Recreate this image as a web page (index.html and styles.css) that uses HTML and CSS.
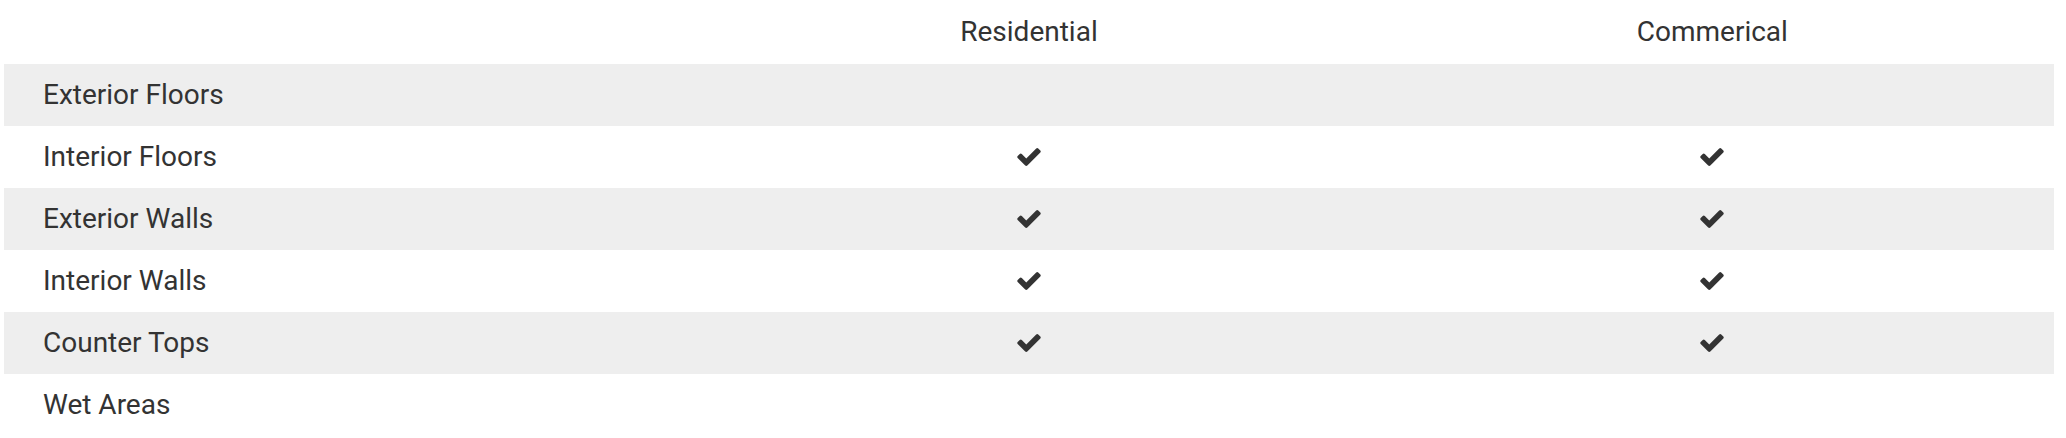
FILE: index.html
```html
<!DOCTYPE html>
<html lang="en">
<head>
<meta charset="utf-8">
<title>Surfaces</title>
<link rel="stylesheet" href="styles.css">
</head>
<body>
<table class="usage">
  <thead>
    <tr><th></th><th>Residential</th><th>Commerical</th></tr>
  </thead>
  <tbody>
    <tr><td>Exterior Floors</td><td></td><td></td></tr>
    <tr><td>Interior Floors</td><td><svg class="check" viewBox="121 334 1550 1188"><path d="M1671 566q0 40-28 68l-724 724-136 136q-28 28-68 28t-68-28l-136-136-362-362q-28-28-28-68t28-68l136-136q28-28 68-28t68 28l294 295 656-657q28-28 68-28t68 28l136 136q28 28 28 68z"/></svg></td><td><svg class="check" viewBox="121 334 1550 1188"><path d="M1671 566q0 40-28 68l-724 724-136 136q-28 28-68 28t-68-28l-136-136-362-362q-28-28-28-68t28-68l136-136q28-28 68-28t68 28l294 295 656-657q28-28 68-28t68 28l136 136q28 28 28 68z"/></svg></td></tr>
    <tr><td>Exterior Walls</td><td><svg class="check" viewBox="121 334 1550 1188"><path d="M1671 566q0 40-28 68l-724 724-136 136q-28 28-68 28t-68-28l-136-136-362-362q-28-28-28-68t28-68l136-136q28-28 68-28t68 28l294 295 656-657q28-28 68-28t68 28l136 136q28 28 28 68z"/></svg></td><td><svg class="check" viewBox="121 334 1550 1188"><path d="M1671 566q0 40-28 68l-724 724-136 136q-28 28-68 28t-68-28l-136-136-362-362q-28-28-28-68t28-68l136-136q28-28 68-28t68 28l294 295 656-657q28-28 68-28t68 28l136 136q28 28 28 68z"/></svg></td></tr>
    <tr><td>Interior Walls</td><td><svg class="check" viewBox="121 334 1550 1188"><path d="M1671 566q0 40-28 68l-724 724-136 136q-28 28-68 28t-68-28l-136-136-362-362q-28-28-28-68t28-68l136-136q28-28 68-28t68 28l294 295 656-657q28-28 68-28t68 28l136 136q28 28 28 68z"/></svg></td><td><svg class="check" viewBox="121 334 1550 1188"><path d="M1671 566q0 40-28 68l-724 724-136 136q-28 28-68 28t-68-28l-136-136-362-362q-28-28-28-68t28-68l136-136q28-28 68-28t68 28l294 295 656-657q28-28 68-28t68 28l136 136q28 28 28 68z"/></svg></td></tr>
    <tr><td>Counter Tops</td><td><svg class="check" viewBox="121 334 1550 1188"><path d="M1671 566q0 40-28 68l-724 724-136 136q-28 28-68 28t-68-28l-136-136-362-362q-28-28-28-68t28-68l136-136q28-28 68-28t68 28l294 295 656-657q28-28 68-28t68 28l136 136q28 28 28 68z"/></svg></td><td><svg class="check" viewBox="121 334 1550 1188"><path d="M1671 566q0 40-28 68l-724 724-136 136q-28 28-68 28t-68-28l-136-136-362-362q-28-28-28-68t28-68l136-136q28-28 68-28t68 28l294 295 656-657q28-28 68-28t68 28l136 136q28 28 28 68z"/></svg></td></tr>
    <tr><td>Wet Areas</td><td></td><td></td></tr>
  </tbody>
</table>
</body>
</html>
```
FILE: styles.css
```css
html, body {
  margin: 0;
  padding: 0;
  background: #fff;
}
body {
  padding: 0 12px 0 4px;
  font-family: Roboto, "Liberation Sans", sans-serif;
  color: #333;
}
.usage {
  width: 2050px;
  border-collapse: collapse;
  table-layout: fixed;
}
.usage th, .usage td {
  height: 62px;
  padding: 0;
  font-size: 28px;
  line-height: 32px;
  font-weight: 400;
  vertical-align: middle;
}
.usage thead th {
  height: 64px;
  text-align: center;
}
.usage td:first-child {
  padding-left: 39px;
  text-align: left;
}
.usage td + td {
  text-align: center;
}
.usage tbody tr:nth-child(odd) {
  background: #eeeeee;
}
.check {
  display: block;
  margin: 0 auto;
  width: 24px;
  height: 18px;
  fill: #333;
}
```
